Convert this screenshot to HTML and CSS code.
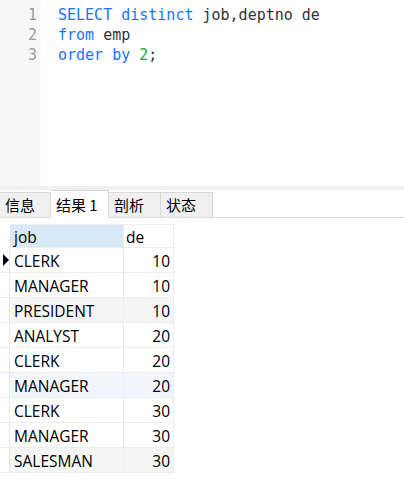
FILE: index.html
```html
<!DOCTYPE html>
<html>
<head>
<meta charset="utf-8">
<link rel="stylesheet" href="styles.css">
</head>
<body>
<div class="editor">
  <div class="gutter">
    <div class="ln">1</div>
    <div class="ln">2</div>
    <div class="ln">3</div>
  </div>
  <div class="code">
    <div class="line"><span class="kw">SELECT</span> <span class="kw">distinct</span> job,deptno de</div>
    <div class="line"><span class="kw">from</span> emp</div>
    <div class="line"><span class="kw">order</span> <span class="kw">by</span> <span class="num">2</span>;</div>
  </div>
</div>
<div class="strip"></div>
<div class="tabs">
  <div class="tab">信息</div>
  <div class="tab active">结果 1</div>
  <div class="tab">剖析</div>
  <div class="tab">状态</div>
  <div class="tab-fill"></div>
</div>
<div class="grid">
  <div class="row head">
    <div class="ind"></div>
    <div class="cell job sel">job</div>
    <div class="cell de">de</div>
  </div>
  <div class="row">
    <div class="ind"><span class="arrow"></span></div>
    <div class="cell job">CLERK</div>
    <div class="cell de num">10</div>
  </div>
  <div class="row">
    <div class="ind"></div>
    <div class="cell job">MANAGER</div>
    <div class="cell de num">10</div>
  </div>
  <div class="row gray">
    <div class="ind"></div>
    <div class="cell job">PRESIDENT</div>
    <div class="cell de num">10</div>
  </div>
  <div class="row">
    <div class="ind"></div>
    <div class="cell job">ANALYST</div>
    <div class="cell de num">20</div>
  </div>
  <div class="row">
    <div class="ind"></div>
    <div class="cell job">CLERK</div>
    <div class="cell de num">20</div>
  </div>
  <div class="row blue">
    <div class="ind"></div>
    <div class="cell job">MANAGER</div>
    <div class="cell de num">20</div>
  </div>
  <div class="row">
    <div class="ind"></div>
    <div class="cell job">CLERK</div>
    <div class="cell de num">30</div>
  </div>
  <div class="row">
    <div class="ind"></div>
    <div class="cell job">MANAGER</div>
    <div class="cell de num">30</div>
  </div>
  <div class="row gray">
    <div class="ind"></div>
    <div class="cell job">SALESMAN</div>
    <div class="cell de num">30</div>
  </div>
</div>
</body>
</html>
```
FILE: styles.css
```css
html, body {
  margin: 0;
  padding: 0;
  background: #ffffff;
}
body {
  width: 404px;
  height: 485px;
  overflow: hidden;
  font-family: "Open Sans", "Noto Sans CJK SC", sans-serif;
}
.editor {
  display: flex;
  height: 186px;
}
.gutter {
  width: 41px;
  background: #f7f7f7;
  padding-top: 5px;
  box-sizing: border-box;
}
.ln {
  height: 20px;
  line-height: 20px;
  text-align: right;
  padding-right: 4px;
  font-family: "DejaVu Sans Mono", monospace;
  font-size: 15px;
  color: #9a9a9a;
}
.code {
  padding-top: 5px;
  padding-left: 17px;
  font-family: "DejaVu Sans Mono", monospace;
  font-size: 15px;
  color: #333333;
}
.line {
  height: 20px;
  line-height: 20px;
  white-space: pre;
}
.kw { color: #1a73ff; }
.code .num { color: #13a83a; }
.strip {
  height: 4px;
  background: #f0f0f0;
}
.tabs {
  display: flex;
  align-items: flex-end;
  height: 28px;
  box-sizing: border-box;
}
.tab {
  height: 26px;
  box-sizing: border-box;
  padding: 0 5px;
  background: #f0f0f0;
  border: 1px solid #d9d9d9;
  border-left: none;
  font-family: "Noto Sans CJK SC", sans-serif;
  font-size: 15px;
  line-height: 24px;
  color: #000000;
  width: 52px;
  white-space: nowrap;
}
.tab:first-child { width: 51px; }
.tab.active {
  height: 28px;
  width: 58px;
  background: #ffffff;
  border-bottom: none;
  border-top: 1px solid #d9d9d9;
  line-height: 27px;
}
.tab-fill {
  flex: 1;
  height: 1px;
  background: #d9d9d9;
}
.grid {
  margin-top: 6px;
  font-size: 15.5px;
  color: #000000;
}
.row {
  display: flex;
  height: 25px;
}
.row.head { height: 24px; }
.ind {
  width: 10px;
  box-sizing: border-box;
  border-right: 1px solid #e6e6e6;
  border-bottom: 1px solid #eeeeee;
  display: flex;
  align-items: center;
  justify-content: center;
}
.head .ind { border-bottom: none; border-right: none; }
.cell {
  box-sizing: border-box;
  border-right: 1px solid #ececec;
  border-bottom: 1px solid #ececec;
  line-height: 23px;
  padding-top: 2px;
  white-space: nowrap;
}
.job {
  width: 114px;
  padding-left: 4px;
}
.de {
  width: 50px;
  padding-left: 2px;
}
.cell.num {
  text-align: right;
  padding-right: 3px;
}
.head .cell { line-height: 22px; padding-top: 1px; border-top: 1px solid #ececec; }
.sel { background: #d9e8f7; }
.gray .cell { background: #f5f5f5; }
.blue .cell { background: #f2f6fc; }
.arrow {
  width: 0;
  height: 0;
  border-top: 6px solid transparent;
  border-bottom: 6px solid transparent;
  border-left: 6px solid #000000;
  margin-left: 2px;
}
```
